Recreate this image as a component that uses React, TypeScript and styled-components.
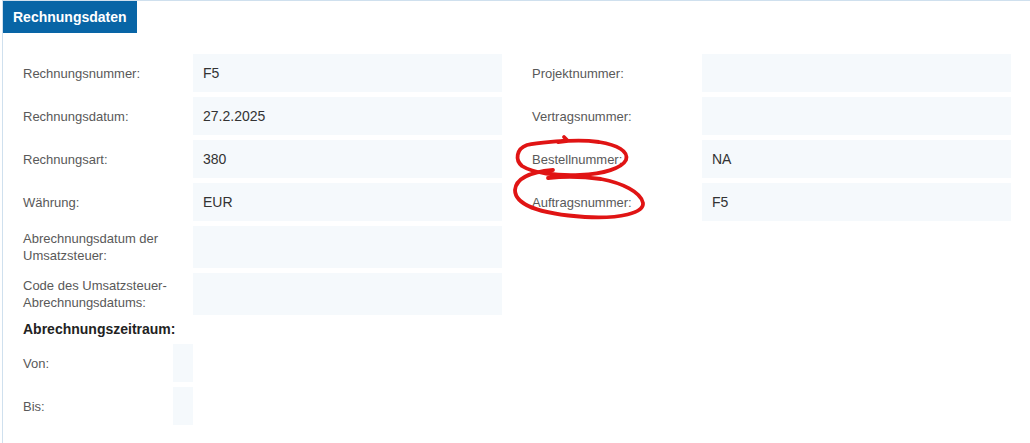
import React from "react";
import styled, { createGlobalStyle } from "styled-components";

const Global = createGlobalStyle`
  html, body { margin: 0; padding: 0; background: #ffffff; }
  body { font-family: "Liberation Sans", Arial, sans-serif; }
  * { box-sizing: border-box; }
`;

const Page = styled.div`
  position: relative;
  width: 1030px;
  height: 443px;
  overflow: hidden;
  padding-left: 2px;
`;

const Panel = styled.section`
  width: 1030px;
  border-top: 1px solid #cfe0ee;
  border-left: 1px solid #cfe0ee;
  border-right: 1px solid #cfe0ee;
  background: #ffffff;
`;

const Tab = styled.div`
  display: inline-block;
  height: 32px;
  line-height: 32px;
  padding: 0 10px;
  background: #0865a6;
  color: #ffffff;
  font-weight: bold;
  font-size: 14px;
`;

const Body = styled.div`
  padding: 21px 20px 18px 20px;
  display: grid;
  grid-template-columns: 479px 479px;
  column-gap: 30px;
  align-items: start;
`;

const Column = styled.div`
  display: flex;
  flex-direction: column;
  gap: 5px;
`;

const Row = styled.div<{ $labelWidth?: number; $valueWidth?: string }>`
  display: grid;
  grid-template-columns: ${(p) => p.$labelWidth ?? 170}px ${(p) => p.$valueWidth ?? "1fr"};
  min-height: 38px;
`;

const Label = styled.div`
  align-self: center;
  padding: 4px 0;
  font-size: 13px;
  line-height: 17px;
  color: #595959;
`;

const Value = styled.div`
  display: flex;
  align-items: center;
  padding: 0 10px;
  background: #f5f9fc;
  font-size: 14px;
  color: #333333;
`;

const Heading = styled.div`
  font-size: 14px;
  font-weight: bold;
  line-height: 19px;
  color: #222222;
`;

const Annotation = styled.svg`
  position: absolute;
  left: 0;
  top: 0;
  pointer-events: none;
`;

type Field = { label: React.ReactNode; value: string };

const left: Field[] = [
  { label: "Rechnungsnummer:", value: "F5" },
  { label: "Rechnungsdatum:", value: "27.2.2025" },
  { label: "Rechnungsart:", value: "380" },
  { label: "Währung:", value: "EUR" },
  {
    label: (
      <>
        Abrechnungsdatum der
        <br />
        Umsatzsteuer:
      </>
    ),
    value: "",
  },
  {
    label: (
      <>
        Code des Umsatzsteuer-
        <br />
        Abrechnungsdatums:
      </>
    ),
    value: "",
  },
];

const right: Field[] = [
  { label: "Projektnummer:", value: "" },
  { label: "Vertragsnummer:", value: "" },
  { label: "Bestellnummer:", value: "NA" },
  { label: "Auftragsnummer:", value: "F5" },
];

export default function App() {
  return (
    <>
      <Global />
      <Page>
        <Panel>
          <Tab>Rechnungsdaten</Tab>
          <Body>
            <Column>
              {left.map((f, i) => (
                <Row key={i}>
                  <Label>{f.label}</Label>
                  <Value>{f.value}</Value>
                </Row>
              ))}
              <Heading>Abrechnungszeitraum:</Heading>
              <Row $labelWidth={150} $valueWidth="20px">
                <Label>Von:</Label>
                <Value />
              </Row>
              <Row $labelWidth={150} $valueWidth="20px">
                <Label>Bis:</Label>
                <Value />
              </Row>
            </Column>
            <Column>
              {right.map((f, i) => (
                <Row key={i}>
                  <Label>{f.label}</Label>
                  <Value>{f.value}</Value>
                </Row>
              ))}
            </Column>
          </Body>
        </Panel>
        <Annotation width="1030" height="443" viewBox="0 0 1030 443">
          <g fill="none" stroke="#e01414" strokeWidth="3.8" strokeLinecap="round" strokeLinejoin="round">
            <path d="M 564 137 L 567 140 C 556 142 540 142 527 145 C 516 149 515 160 522 166 C 533 173 556 176 580 175 C 604 174 622 168 626 160 C 629 151 617 145 599 142 C 585 140 572 140 558 142" />
            <path d="M 553 170 C 531 172 516 178 515 190 C 515 204 538 214 585 217 C 620 219 644 213 643 203 C 641 192 622 183 601 179 C 586 177 568 176 548 178" />
          </g>
        </Annotation>
      </Page>
    </>
  );
}
